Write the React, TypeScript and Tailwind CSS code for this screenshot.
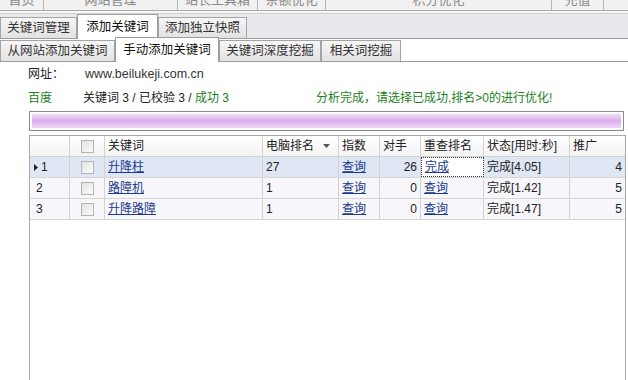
import React from 'react';

const FONT = "font-['Liberation_Sans','Noto_Sans_CJK_SC',sans-serif]";

const MENU = [
  { label: '首页', w: 'w-[44px]' },
  { label: '网站管理', w: 'w-[134px]' },
  { label: '站长工具箱', w: 'w-[80px]' },
  { label: '亲额优化', w: 'w-[68px]' },
  { label: '积分优化', w: 'w-[226px]' },
  { label: '充值', w: 'w-[52px]' },
];

const ROWS = [
  { no: '1', kw: '升降柱', rank: '27', rival: '26', recheck: '完成', status: '完成[4.05]', promo: '4', current: true },
  { no: '2', kw: '路障机', rank: '1', rival: '0', recheck: '查询', status: '完成[1.42]', promo: '5', current: false },
  { no: '3', kw: '升降路障', rank: '1', rival: '0', recheck: '查询', status: '完成[1.47]', promo: '5', current: false },
];

const COLS = 'grid grid-cols-[40px_35px_158px_76px_41px_41px_63px_86px_55px]';

function Tab({ label, active, w }: { label: string; active?: boolean; w: string }) {
  return (
    <div
      className={
        active
          ? `${w} relative z-10 -mb-px h-[25px] border border-b-0 border-[#9c9c9c] bg-white pt-[4px] text-center text-[12.5px] text-[#111]`
          : `${w} h-[21px] border border-b-0 border-[#a4a4a4] bg-gradient-to-b from-[#f6f6f6] to-[#e2e2e2] pt-[2px] text-center text-[12.5px] text-[#333]`
      }
    >
      {label}
    </div>
  );
}

function Checkbox() {
  return <div className="h-[13px] w-[13px] border border-[#b4b4b4] bg-gradient-to-br from-[#e2e2e2] to-[#fcfcfc]" />;
}

export default function App() {
  return (
    <div className={`${FONT} h-[380px] w-[628px] overflow-hidden bg-white text-[12px] leading-[16px] text-[#222]`}>
      {/* top menu, mostly scrolled away */}
      <div className="flex h-[11px] overflow-hidden border-b border-[#aaaaaa] bg-[#f1f1f1]">
        {MENU.map((m) => (
          <div key={m.label} className={`${m.w} -mt-[8px] border-r border-[#b4b4b4] text-center text-[13px] text-[#8a8a8a]`}>
            {m.label}
          </div>
        ))}
      </div>
      <div className="h-[3px] border-b border-[#cdcdcd] bg-[#f7f7f7]" />

      {/* tab row 1 */}
      <div className="flex h-[25px] items-end border-b border-[#9c9c9c] bg-[#e9e9ed]">
        <Tab label="关键词管理" w="w-[77px]" />
        <Tab label="添加关键词" w="w-[81px]" active />
        <Tab label="添加独立快照" w="w-[89px]" />
      </div>

      {/* tab row 2 */}
      <div className="flex h-[23px] items-end border-b border-[#9c9c9c] bg-white">
        <Tab label="从网站添加关键词" w="w-[115px]" />
        <Tab label="手动添加关键词" w="w-[104px]" active />
        <Tab label="关键词深度挖掘" w="w-[102px]" />
        <Tab label="相关词挖掘" w="w-[80px]" />
      </div>

      <div className="pl-[28px]">
        <div className="mt-[4px] flex h-[16px] items-center">
          <span className="w-[57px]">网址：</span>
          <span className="text-[12.5px] text-[#333]">www.beilukeji.com.cn</span>
        </div>
        <div className="mt-[8px] flex h-[16px] items-center">
          <span className="w-[55px] text-[#1c7f1c]">百度</span>
          <span className="w-[233px]">
            关键词 3 / 已校验 3 / <span className="text-[#1c7f1c]">成功 3</span>
          </span>
          <span className="text-[#1c7f1c]">分析完成，请选择已成功,排名&gt;0的进行优化!</span>
        </div>
      </div>

      {/* progress */}
      <div className="ml-[29px] mt-[5px] h-[20px] w-[595px] border border-[#8a8a8a] bg-white p-[2px]">
        <div className="h-full w-full bg-gradient-to-b from-[#f0dcf8] via-[#dcaeee] to-[#eed8f8]" />
      </div>

      {/* grid */}
      <div className="ml-[29px] mt-[4px] h-[245px] w-[597px] border-l border-r border-t border-[#a8a8a8] bg-white">
        <div className={`${COLS} h-[21px] border-b border-[#d2d2d2] bg-gradient-to-b from-white to-[#f3f3f3]`}>
          <div className="border-r border-[#d2d2d2]" />
          <div className="flex items-center justify-center border-r border-[#d2d2d2]">
            <Checkbox />
          </div>
          <div className="flex items-center border-r border-[#d2d2d2] pl-[3px]">关键词</div>
          <div className="flex items-center justify-between border-r border-[#d2d2d2] pl-[3px] pr-[8px]">
            电脑排名
            <svg width="7" height="4" viewBox="0 0 7 4">
              <path d="M0 0h7L3.5 4z" fill="#555" />
            </svg>
          </div>
          <div className="flex items-center border-r border-[#d2d2d2] pl-[3px]">指数</div>
          <div className="flex items-center border-r border-[#d2d2d2] pl-[3px]">对手</div>
          <div className="flex items-center border-r border-[#d2d2d2] pl-[3px]">重查排名</div>
          <div className="flex items-center border-r border-[#d2d2d2] pl-[3px]">状态[用时:秒]</div>
          <div className="flex items-center pl-[3px]">推广</div>
        </div>

        {ROWS.map((r) => (
          <div
            key={r.no}
            className={`${COLS} h-[21px] border-b border-[#d6d6d6] ${r.current ? 'bg-[#dfe7f5]' : 'bg-[#f7f7fb]'}`}
          >
            <div className="flex items-center gap-[3px] border-r border-[#d2d2d2] pl-[4px]">
              {r.current ? (
                <svg width="4" height="7" viewBox="0 0 4 7">
                  <path d="M0 0l4 3.5L0 7z" fill="#222" />
                </svg>
              ) : null}
              <span className={r.current ? '' : 'pl-[2px]'}>{r.no}</span>
            </div>
            <div className="flex items-center justify-center border-r border-[#d2d2d2]">
              <Checkbox />
            </div>
            <div className="flex items-center border-r border-[#d2d2d2] pl-[3px] text-[#1b3a8c] underline">{r.kw}</div>
            <div className="flex items-center border-r border-[#d2d2d2] pl-[3px]">{r.rank}</div>
            <div className="flex items-center border-r border-[#d2d2d2] pl-[3px] text-[#1b3a8c] underline">查询</div>
            <div className="flex items-center justify-end border-r border-[#d2d2d2] pr-[3px]">{r.rival}</div>
            <div
              className={`flex items-center border-r pl-[3px] text-[#1b3a8c] underline ${
                r.current ? 'border border-dotted border-[#333] bg-white' : 'border-[#d2d2d2]'
              }`}
            >
              {r.recheck}
            </div>
            <div className="flex items-center border-r border-[#d2d2d2] pl-[3px]">{r.status}</div>
            <div className="flex items-center justify-end pr-[3px]">{r.promo}</div>
          </div>
        ))}
      </div>
    </div>
  );
}
